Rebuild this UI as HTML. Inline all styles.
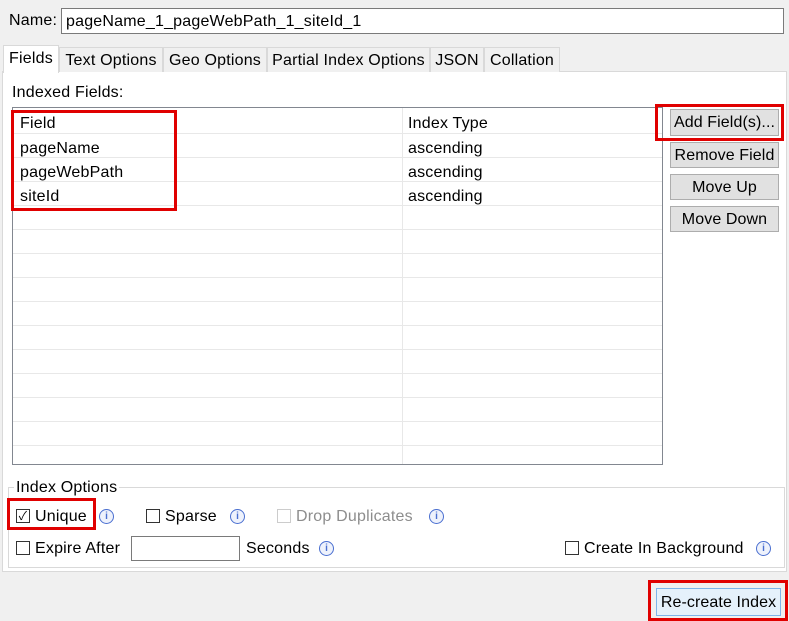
<!DOCTYPE html><html><head><style>
body{margin:0;width:789px;height:621px;background:#f0f0f0;font-family:"Liberation Sans","Noto Sans CJK SC",sans-serif;font-size:16px;letter-spacing:0.2px;color:#000;position:relative;overflow:hidden}
.a{position:absolute;white-space:nowrap}
.red{position:absolute;border:3px solid #e00000;box-sizing:border-box}
.btn{position:absolute;background:#e1e1e1;border:1px solid #adadad;box-sizing:border-box;text-align:center;line-height:26px;letter-spacing:0.1px}
.tab{position:absolute;top:47px;height:25px;border:1px solid #d9d9d9;border-bottom:none;box-sizing:border-box;line-height:26px;text-align:center;background:#f0f0f0}
.row{position:absolute;left:13px;width:649px;height:24px;border-bottom:1px solid #e8e8e8;box-sizing:border-box}
.cb{position:absolute;width:14px;height:14px;border:1px solid #333;box-sizing:border-box;background:#fff}
.i{position:absolute;width:15px;height:15px;border:1px solid #4a6fd0;border-radius:50%;box-sizing:border-box;color:#4a6fd0;font-size:10px;text-align:center;line-height:13px;font-weight:bold;letter-spacing:0;background:#eef2fc}
</style></head><body>
<div class="a" style="left:9px;top:12px">Name:</div>
<div class="a" style="left:61px;top:8px;width:723px;height:26px;border:1px solid #7a7a7a;background:#fff;box-sizing:border-box;padding-left:4px;line-height:26px">pageName_1_pageWebPath_1_siteId_1</div>
<div class="a" style="left:2px;top:71px;width:785px;height:501px;background:#fff;border:1px solid #d9d9d9;box-sizing:border-box"></div>
<div class="tab" style="left:3px;top:45px;width:56px;height:28px;background:#fff;z-index:2">Fields</div>
<div class="tab" style="left:59px;width:104px">Text Options</div>
<div class="tab" style="left:163px;width:104px">Geo Options</div>
<div class="tab" style="left:267px;width:163px">Partial Index Options</div>
<div class="tab" style="left:430px;width:54px">JSON</div>
<div class="tab" style="left:484px;width:76px">Collation</div>
<div class="a" style="left:12px;top:84px">Indexed Fields:</div>
<div class="a" style="left:12px;top:107px;width:651px;height:358px;border:1px solid #828790;box-sizing:border-box;background:#fff"></div>
<div class="a" style="left:402px;top:108px;width:1px;height:356px;background:#e8e8e8"></div>
<div class="row" style="top:110px"></div><div class="row" style="top:134px"></div><div class="row" style="top:158px"></div><div class="row" style="top:182px"></div><div class="row" style="top:206px"></div><div class="row" style="top:230px"></div><div class="row" style="top:254px"></div><div class="row" style="top:278px"></div><div class="row" style="top:302px"></div><div class="row" style="top:326px"></div><div class="row" style="top:350px"></div><div class="row" style="top:374px"></div><div class="row" style="top:398px"></div><div class="row" style="top:422px"></div>
<div class="a" style="left:20px;top:115px">Field</div><div class="a" style="left:408px;top:115px">Index Type</div>
<div class="a" style="left:20px;top:140px">pageName</div><div class="a" style="left:408px;top:140px">ascending</div>
<div class="a" style="left:20px;top:164px">pageWebPath</div><div class="a" style="left:408px;top:164px">ascending</div>
<div class="a" style="left:20px;top:188px">siteId</div><div class="a" style="left:408px;top:188px">ascending</div>
<div class="red" style="left:11px;top:110px;width:166px;height:101px"></div>
<div class="btn" style="left:670px;top:109px;width:109px;height:27px">Add Field(s)...</div>
<div class="red" style="left:655px;top:104px;width:129px;height:37px"></div>
<div class="btn" style="left:670px;top:142px;width:109px;height:26px">Remove Field</div>
<div class="btn" style="left:670px;top:174px;width:109px;height:26px">Move Up</div>
<div class="btn" style="left:670px;top:206px;width:109px;height:26px">Move Down</div>
<div class="a" style="left:8px;top:487px;width:777px;height:81px;border:1px solid #d9d9d9;box-sizing:border-box"></div>
<div class="a" style="left:14px;top:479px;background:#fff;padding:0 2px">Index Options</div>
<div class="cb" style="left:16px;top:509px;font-size:12px;line-height:12px;text-align:center">✓</div>
<div class="a" style="left:35px;top:508px">Unique</div><div class="i" style="left:99px;top:509px">i</div>
<div class="red" style="left:7px;top:498px;width:89px;height:32px"></div>
<div class="cb" style="left:146px;top:509px"></div><div class="a" style="left:165px;top:508px">Sparse</div><div class="i" style="left:230px;top:509px">i</div>
<div class="cb" style="left:277px;top:509px;border-color:#ccc"></div><div class="a" style="left:296px;top:508px;color:#8d8d8d">Drop Duplicates</div><div class="i" style="left:429px;top:509px">i</div>
<div class="cb" style="left:16px;top:541px"></div><div class="a" style="left:35px;top:540px">Expire After</div>
<div class="a" style="left:131px;top:536px;width:109px;height:25px;border:1px solid #7a7a7a;background:#fff;box-sizing:border-box"></div>
<div class="a" style="left:246px;top:540px">Seconds</div><div class="i" style="left:319px;top:541px">i</div>
<div class="cb" style="left:565px;top:541px"></div><div class="a" style="left:584px;top:540px">Create In Background</div><div class="i" style="left:756px;top:541px">i</div>
<div class="btn" style="left:656px;top:588px;width:125px;height:28px;border-color:#7eb4ea;background:#e5f1fb;line-height:27px">Re-create Index</div>
<div class="red" style="left:648px;top:580px;width:140px;height:41px"></div>
</body></html>
